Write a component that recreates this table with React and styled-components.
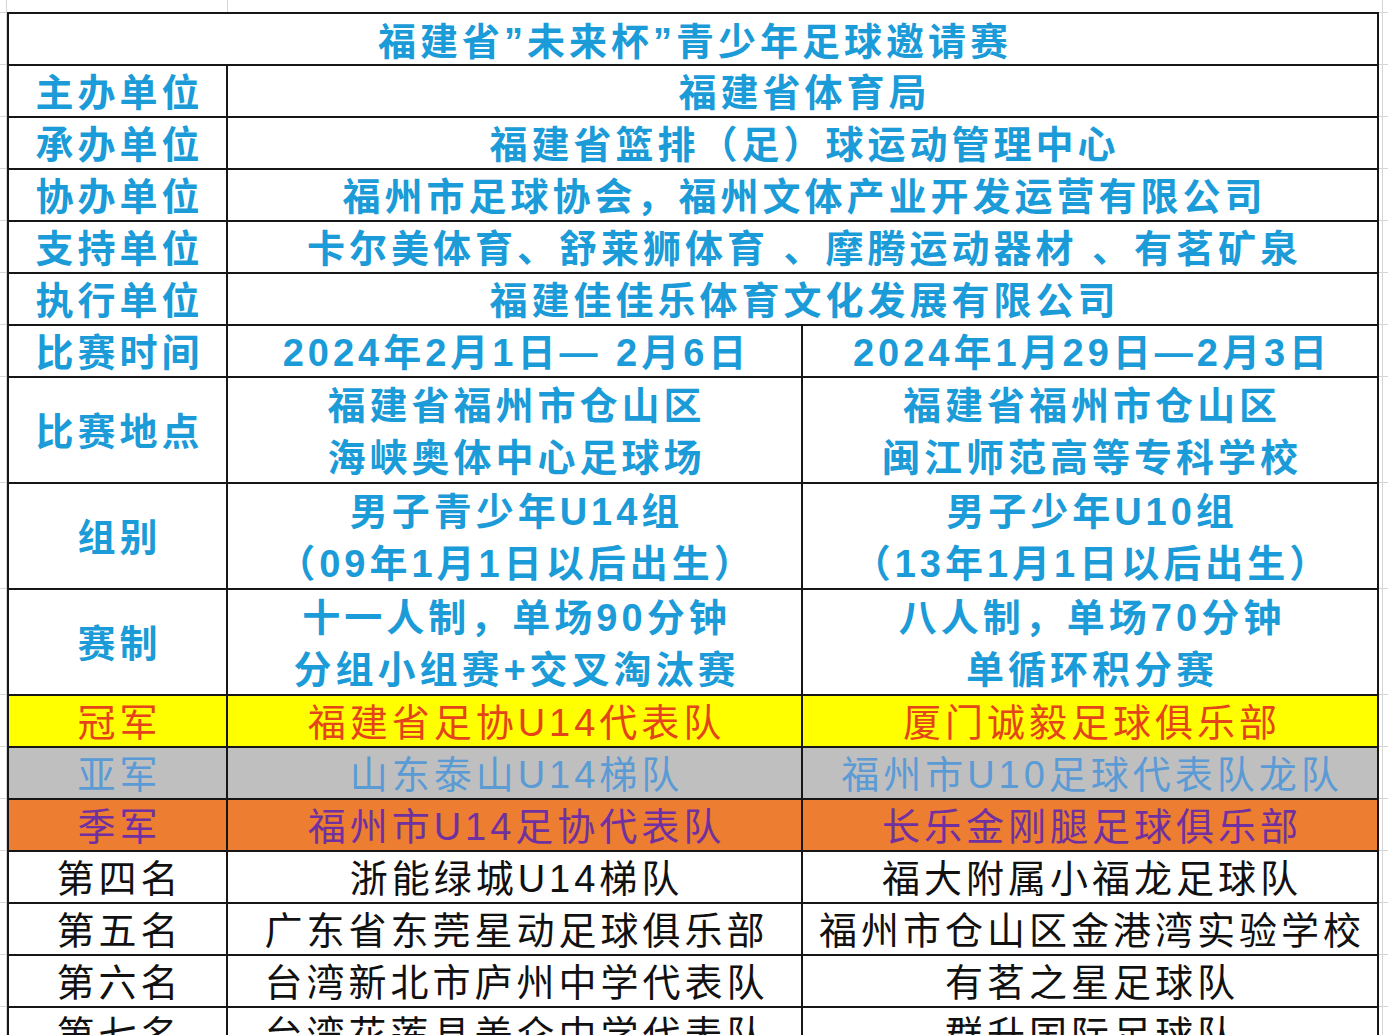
import React from "react";
import styled, { createGlobalStyle, css } from "styled-components";

const GlobalStyle = createGlobalStyle`
  html, body {
    margin: 0;
    padding: 0;
    background: #ffffff;
    overflow: hidden;
  }
  body {
    font-family: "Liberation Sans", "Noto Sans CJK SC", sans-serif;
  }
`;

// spreadsheet gridlines that show around the bordered table
const GRID = "#d6d6d6";
const colLines = [6, 227, 1382];
const rowLines = [12, 64, 116, 168, 220, 272, 324, 376, 482, 588, 694, 746, 798, 850, 902, 954, 1006];
const sheetBackground = [
  ...colLines.map((x) => `linear-gradient(${GRID}, ${GRID}) ${x}px 0 / 1px 100% no-repeat`),
  ...rowLines.map((y) => `linear-gradient(${GRID}, ${GRID}) 0 ${y}px / 100% 1px no-repeat`),
  "#ffffff",
].join(", ");

const BLUE = "#1b9bd7";

const tones = {
  info: css`
    background: #ffffff;
    color: ${BLUE};
    font-weight: 700;
  `,
  gold: css`
    background: #ffff00;
    color: #e4441a;
  `,
  silver: css`
    background: #bfbfbf;
    color: #5b9bd5;
  `,
  bronze: css`
    background: #ed7d31;
    color: #7030a0;
  `,
  plain: css`
    background: #ffffff;
    color: #111111;
  `,
};

const Sheet = styled.div`
  width: 1388px;
  height: 1035px;
  box-sizing: border-box;
  padding: 12px 0 0 7px;
  overflow: hidden;
  background: ${sheetBackground};
`;

const Table = styled.div`
  display: grid;
  grid-template-columns: 217px 573px 574px;
  gap: 2px;
  padding: 2px;
  width: max-content;
  background: #161616;
`;

const Cell = styled.div`
  box-sizing: border-box;
  grid-column: span ${(p) => p.$span || 1};
  height: ${(p) => (p.$tall ? 104 : 50)}px;
  display: flex;
  flex-direction: column;
  align-items: center;
  justify-content: center;
  overflow: hidden;
  white-space: nowrap;
  font-size: 38px;
  letter-spacing: 4px;
  padding: ${(p) => (p.$title ? 6 : 3)}px 0 0 4px;
  line-height: 52px;
  ${(p) => tones[p.$tone || "info"]}
`;

const Line = styled.span`
  display: block;
`;

const info = [
  ["主办单位", "福建省体育局"],
  ["承办单位", "福建省篮排（足）球运动管理中心"],
  ["协办单位", "福州市足球协会，福州文体产业开发运营有限公司"],
  ["支持单位", "卡尔美体育、舒莱狮体育 、摩腾运动器材 、有茗矿泉"],
  ["执行单位", "福建佳佳乐体育文化发展有限公司"],
];

const details = [
  { label: "比赛时间", a: ["2024年2月1日— 2月6日"], b: ["2024年1月29日—2月3日"] },
  {
    label: "比赛地点",
    a: ["福建省福州市仓山区", "海峡奥体中心足球场"],
    b: ["福建省福州市仓山区", "闽江师范高等专科学校"],
  },
  {
    label: "组别",
    a: ["男子青少年U14组", "（09年1月1日以后出生）"],
    b: ["男子少年U10组", "（13年1月1日以后出生）"],
  },
  {
    label: "赛制",
    a: ["十一人制，单场90分钟", "分组小组赛+交叉淘汰赛"],
    b: ["八人制，单场70分钟", "单循环积分赛"],
  },
];

const results = [
  { tone: "gold", label: "冠军", a: "福建省足协U14代表队", b: "厦门诚毅足球俱乐部" },
  { tone: "silver", label: "亚军", a: "山东泰山U14梯队", b: "福州市U10足球代表队龙队" },
  { tone: "bronze", label: "季军", a: "福州市U14足协代表队", b: "长乐金刚腿足球俱乐部" },
  { tone: "plain", label: "第四名", a: "浙能绿城U14梯队", b: "福大附属小福龙足球队" },
  { tone: "plain", label: "第五名", a: "广东省东莞星动足球俱乐部", b: "福州市仓山区金港湾实验学校" },
  { tone: "plain", label: "第六名", a: "台湾新北市庐州中学代表队", b: "有茗之星足球队" },
  { tone: "plain", label: "第七名", a: "台湾花莲县美仑中学代表队", b: "群升国际足球队" },
];

export default function App() {
  return (
    <>
      <GlobalStyle />
      <Sheet>
        <Table>
          <Cell $span={3} $title>
            福建省”未来杯”青少年足球邀请赛
          </Cell>

          {info.map(([label, value]) => (
            <React.Fragment key={label}>
              <Cell>{label}</Cell>
              <Cell $span={2}>{value}</Cell>
            </React.Fragment>
          ))}

          {details.map((row) => {
            const tall = row.a.length > 1;
            return (
              <React.Fragment key={row.label}>
                <Cell $tall={tall}>{row.label}</Cell>
                <Cell $tall={tall}>
                  {row.a.map((t) => (
                    <Line key={t}>{t}</Line>
                  ))}
                </Cell>
                <Cell $tall={tall}>
                  {row.b.map((t) => (
                    <Line key={t}>{t}</Line>
                  ))}
                </Cell>
              </React.Fragment>
            );
          })}

          {results.map((row) => (
            <React.Fragment key={row.label}>
              <Cell $tone={row.tone}>{row.label}</Cell>
              <Cell $tone={row.tone}>{row.a}</Cell>
              <Cell $tone={row.tone}>{row.b}</Cell>
            </React.Fragment>
          ))}
        </Table>
      </Sheet>
    </>
  );
}
